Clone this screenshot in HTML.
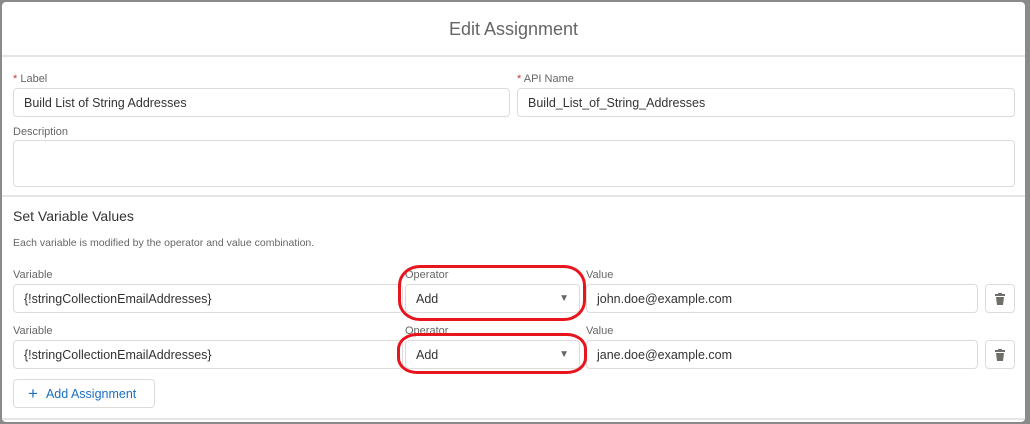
<!DOCTYPE html>
<html><head><style>
*{box-sizing:border-box;margin:0;padding:0}
body{width:1030px;height:424px;background:#8a8a8a;position:relative;overflow:hidden;font-family:"Liberation Sans",sans-serif;color:#3e3e3c}
.m{position:absolute;left:2px;top:2px;width:1023px;height:420px;background:#fff;border-radius:4px}
.a{position:absolute}
.lbl{font-size:11px;color:#666}
.in{position:absolute;border:1px solid #dddbda;border-radius:4px;background:#fff;font-size:12.5px;color:#333;padding-left:10px;display:flex;align-items:center}
.hr{position:absolute;left:0;width:1023px;height:2px;background:#e5e5e5}
</style></head><body>
<div class="m">
<div class="a" style="left:0;width:1023px;top:17px;text-align:center;font-size:18px;color:#666">Edit Assignment</div>
<div class="hr" style="top:53px"></div>
<div class="a lbl" style="left:11px;top:71px"><span style="color:#c23934">*</span> Label</div>
<div class="in" style="left:11px;top:86px;width:497px;height:29px">Build List of String Addresses</div>
<div class="a lbl" style="left:515px;top:71px"><span style="color:#c23934">*</span> API Name</div>
<div class="in" style="left:515px;top:86px;width:498px;height:29px">Build_List_of_String_Addresses</div>
<div class="a lbl" style="left:11px;top:124px">Description</div>
<div class="in" style="left:11px;top:138px;width:1002px;height:47px"></div>
<div class="hr" style="top:193px"></div>
<div class="a" style="left:11px;top:206px;font-size:14px;color:#333">Set Variable Values</div>
<div class="a" style="left:11px;top:235px;font-size:10.5px;color:#666">Each variable is modified by the operator and value combination.</div>

<div class="a lbl" style="left:11px;top:267px">Variable</div>
<div class="in" style="left:11px;top:282px;width:390px;height:29px">{!stringCollectionEmailAddresses}</div>
<div class="a lbl" style="left:403px;top:267px">Operator</div>
<div class="in" style="left:403px;top:282px;width:175px;height:29px">Add<span style="position:absolute;right:10px;font-size:10px;color:#666">▼</span></div>
<div class="a lbl" style="left:584px;top:267px">Value</div>
<div class="in" style="left:584px;top:282px;width:392px;height:29px">john.doe@example.com</div>
<div class="in" style="left:983px;top:282px;width:30px;height:29px;padding:0;justify-content:center"><svg width="10" height="12" viewBox="0 0 10 12"><rect x="0" y="1" width="10" height="2" fill="#706e6b"/><rect x="3" y="0" width="4" height="2" fill="#706e6b"/><path d="M1 4h8l-1 8H2z" fill="#706e6b"/></svg></div>

<div class="a lbl" style="left:11px;top:323px">Variable</div>
<div class="in" style="left:11px;top:338px;width:390px;height:29px">{!stringCollectionEmailAddresses}</div>
<div class="a lbl" style="left:403px;top:323px">Operator</div>
<div class="in" style="left:403px;top:338px;width:175px;height:29px">Add<span style="position:absolute;right:10px;font-size:10px;color:#666">▼</span></div>
<div class="a lbl" style="left:584px;top:323px">Value</div>
<div class="in" style="left:584px;top:338px;width:392px;height:29px">jane.doe@example.com</div>
<div class="in" style="left:983px;top:338px;width:30px;height:29px;padding:0;justify-content:center"><svg width="10" height="12" viewBox="0 0 10 12"><rect x="0" y="1" width="10" height="2" fill="#706e6b"/><rect x="3" y="0" width="4" height="2" fill="#706e6b"/><path d="M1 4h8l-1 8H2z" fill="#706e6b"/></svg></div>

<div class="in" style="left:11px;top:377px;width:142px;height:29px;color:#1b6fc4;padding-left:14px;font-size:12.5px"><span style="font-size:17px;margin-right:8px">+</span>Add Assignment</div>
<div class="hr" style="top:416px"></div>

<div class="a" style="left:396px;top:263px;width:188px;height:56px;border:3px solid #e8151f;border-radius:22px/20px"></div>
<div class="a" style="left:395px;top:331px;width:190px;height:41px;border:3px solid #e8151f;border-radius:20px/16px"></div>
</div>
</body></html>
